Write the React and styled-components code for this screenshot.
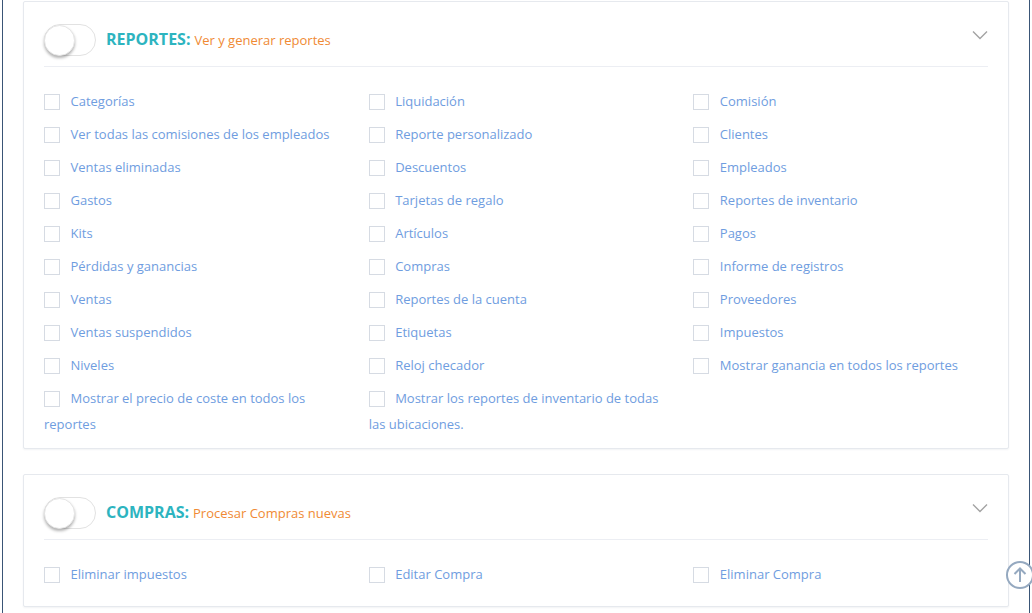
import React from 'react'
import styled, { createGlobalStyle } from 'styled-components'

const GlobalStyle = createGlobalStyle`
  html, body {
    margin: 0;
    padding: 0;
    background: #ffffff;
    font-family: "Open Sans", "Liberation Sans", sans-serif;
  }
  * { box-sizing: border-box; }
`

const reportes = [
  'Categorías', 'Liquidación', 'Comisión',
  'Ver todas las comisiones de los empleados', 'Reporte personalizado', 'Clientes',
  'Ventas eliminadas', 'Descuentos', 'Empleados',
  'Gastos', 'Tarjetas de regalo', 'Reportes de inventario',
  'Kits', 'Artículos', 'Pagos',
  'Pérdidas y ganancias', 'Compras', 'Informe de registros',
  'Ventas', 'Reportes de la cuenta', 'Proveedores',
  'Ventas suspendidos', 'Etiquetas', 'Impuestos',
  'Niveles', 'Reloj checador', 'Mostrar ganancia en todos los reportes',
  'Mostrar el precio de coste en todos los reportes',
  'Mostrar los reportes de inventario de todas las ubicaciones.',
]

const compras = ['Eliminar impuestos', 'Editar Compra', 'Eliminar Compra']

function Section({ title, subtitle, items, bottom }) {
  return (
    <Card $bottom={bottom}>
      <Header>
        <Toggle>
          <Knob />
        </Toggle>
        <Title>{title}:</Title>
        <Subtitle>{subtitle}</Subtitle>
        <Chevron viewBox="0 0 16 10" width="16" height="10">
          <path d="M1 1.5 L8 8.5 L15 1.5" fill="none" stroke="#a3a3a3" strokeWidth="1.4" />
        </Chevron>
      </Header>
      <Grid>
        {items.map((t) => (
          <Item key={t}>
            <Box />
            {t}
          </Item>
        ))}
      </Grid>
    </Card>
  )
}

export default function App() {
  return (
    <>
      <GlobalStyle />
      <Frame>
        <Section title="REPORTES" subtitle="Ver y generar reportes" items={reportes} bottom={4} />
        <Section title="COMPRAS" subtitle="Procesar Compras nuevas" items={compras} bottom={12} />
      </Frame>
      <ScrollTop>
        <svg viewBox="0 0 30 30" width="30" height="30">
          <circle cx="15" cy="15" r="13" fill="#fff" stroke="#95a9c0" strokeWidth="2" />
          <path d="M15 22 V8.5 M9.5 14 L15 8.5 L20.5 14" fill="none" stroke="#95a9c0" strokeWidth="2" />
        </svg>
      </ScrollTop>
    </>
  )
}

const Frame = styled.div`
  margin-left: 2px;
  width: 1028px;
  min-height: 613px;
  border-left: 1px solid #3a5576;
  border-right: 1px solid #3a5576;
  padding: 1px 20px 0;
  display: flex;
  flex-direction: column;
  gap: 25px;
`

const Card = styled.div`
  background: #fff;
  border: 1px solid #e6e9ee;
  border-radius: 2px;
  box-shadow: 0 1px 2px rgba(30, 50, 80, 0.06);
  padding: 22px 20px ${(p) => p.$bottom}px;
`

const Header = styled.div`
  display: flex;
  align-items: center;
  height: 43px;
  padding-bottom: 10px;
  border-bottom: 1px solid #eceef3;
  position: relative;
`

const Toggle = styled.div`
  width: 52px;
  height: 32px;
  border: 1px solid #e2e2e2;
  border-radius: 16px;
  background: #fff;
  position: relative;
  margin-right: 10px;
`

const Knob = styled.div`
  position: absolute;
  left: -1px;
  top: 0;
  width: 31px;
  height: 31px;
  border-radius: 50%;
  background: #fff;
  box-shadow: 0 2px 3px rgba(0, 0, 0, 0.3);
  border: 1px solid #e6e6e6;
`

const Title = styled.span`
  font-size: 16px;
  font-weight: 700;
  color: #2db4bf;
  margin-right: 4px;
  margin-top: -2px;
`

const Subtitle = styled.span`
  font-size: 13px;
  color: #f08a34;
  margin-top: -1px;
`

const Chevron = styled.svg`
  position: absolute;
  right: 0;
  top: 6px;
`

const Grid = styled.div`
  display: grid;
  grid-template-columns: repeat(3, 1fr);
  column-gap: 30px;
  padding-top: 21px;
`

const Item = styled.div`
  font-size: 13px;
  line-height: 26px;
  color: #6f9de0;
  margin-bottom: 7px;
`

const Box = styled.span`
  display: inline-block;
  width: 16px;
  height: 16px;
  border: 1px solid #d6dbe3;
  background: #fff;
  vertical-align: -4px;
  margin-right: 10.5px;
`

const ScrollTop = styled.div`
  position: fixed;
  left: 1005px;
  top: 560px;
  width: 30px;
  height: 30px;
`
